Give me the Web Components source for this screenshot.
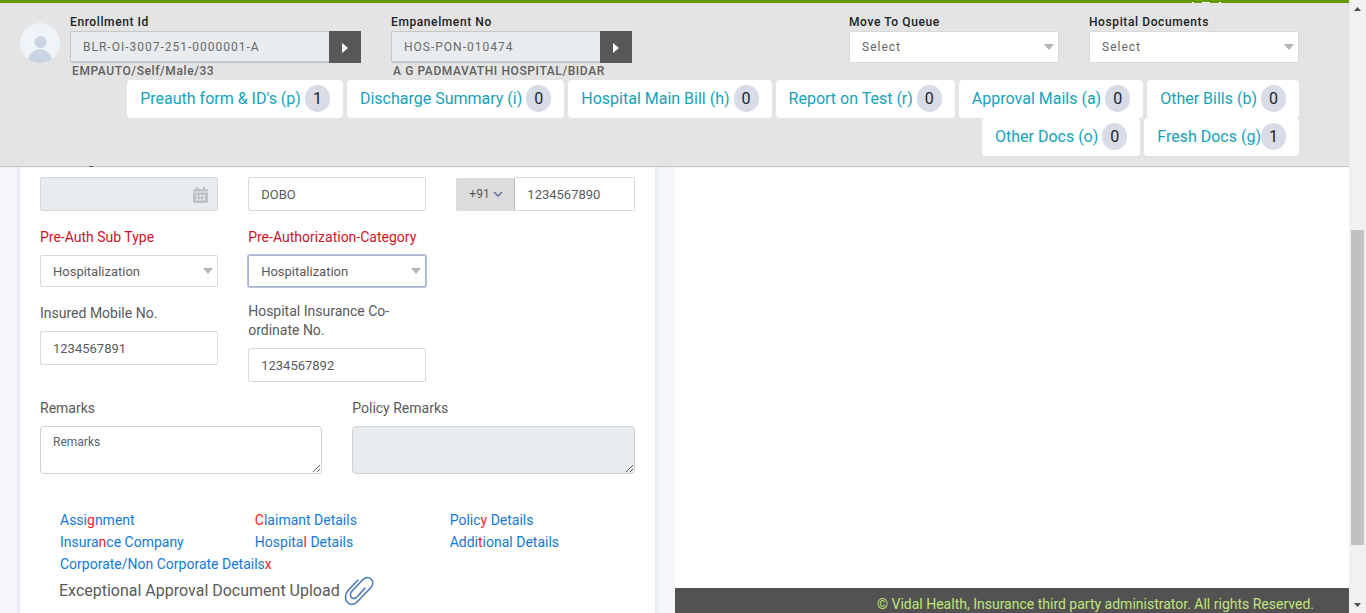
<!DOCTYPE html>
<html lang="en">
<head>
<meta charset="utf-8">
<meta name="viewport" content="width=device-width, initial-scale=1">
<title>Pre-Authorization</title>
<style>
  html, body { margin: 0; height: 100%; }
  body { font-family: Roboto, "Liberation Sans", sans-serif; font-size: 14px; color: #5a5a5a; background: #f4f6fb; overflow: hidden; }
</style>
</head>
<body>
<preauth-app></preauth-app>

<script>
const define = (name, html, setup) => {
  const template = document.createElement('template');
  template.innerHTML = html;
  customElements.define(name, class extends HTMLElement {
    constructor() {
      super();
      this.attachShadow({ mode: 'open' }).append(template.content.cloneNode(true));
    }
    connectedCallback() {
      if (setup && !this.ready) { this.ready = true; setup(this, this.shadowRoot); }
    }
  });
};

const fieldCss = `
  *, *::before, *::after { box-sizing: border-box; }
  :host { display: block; min-width: 0; }
  label { display: flex; align-items: flex-end; min-height: 21px; line-height: 19px; margin-bottom: 8px; color: #5a5a5a; }
  :host([required]) label { color: #d0142c; }
  input, select, textarea { display: block; width: 100%; height: 34px; margin: 0; padding: 0 12px; border: 1px solid #d9d9d9; border-radius: 2px; background: #fff; color: #5a5a5a; font: inherit; font-size: 13px; letter-spacing: inherit; outline: 0; }
  :host([compact]) label { min-height: 18px; line-height: 18px; margin: 0; font-size: 12px; font-weight: 500; letter-spacing: 0.05em; color: #212121; }
  :host([compact]) select { height: 32px; font-size: 12px; color: #646464; }
`;

/* Text box */
define('text-field', `
  <style>${fieldCss}
    .box { position: relative; }
    input:disabled { background: #e8ecef; color: #5a5a5a; }
    :host([nolabel]) label { display: none; }
    ::slotted(svg) { position: absolute; right: 10px; top: 10px; }
  </style>
  <label for="c"></label>
  <div class="box"><input id="c" type="text"><slot></slot></div>`,
  (host, root) => {
    const input = root.querySelector('input');
    root.querySelector('label').textContent = host.getAttribute('label');
    if (host.hasAttribute('nolabel')) input.setAttribute('aria-label', host.getAttribute('label'));
    input.value = host.getAttribute('value') || '';
    input.disabled = host.hasAttribute('disabled');
  });

/* Drop-down */
define('select-field', `
  <style>${fieldCss}
    .box { position: relative; }
    select { appearance: none; height: 32px; }
    .box::after { content: ""; position: absolute; right: 5px; top: 13px; border: 5px solid transparent; border-top: 6px solid #b5b5b5; border-bottom: 0; pointer-events: none; }
    :host([active]) select { border-color: #a9b5cd; box-shadow: 0 0 0 1px #bac4d8; }
  </style>
  <label for="c"></label>
  <div class="box"><select id="c"><option></option></select></div>`,
  (host, root) => {
    root.querySelector('label').textContent = host.getAttribute('label');
    root.querySelector('option').textContent = host.getAttribute('value');
  });

/* Multi-line box */
define('area-field', `
  <style>${fieldCss}
    textarea { height: 48px; padding: 7px 12px; border-color: #d2d2d2; border-radius: 4px; font-size: 12px; line-height: 16px; }
    textarea::placeholder { color: #5a5f66; opacity: 1; }
    textarea:disabled { background: #e8ecef; }
  </style>
  <label for="c"></label>
  <textarea id="c"></textarea>`,
  (host, root) => {
    const area = root.querySelector('textarea');
    root.querySelector('label').textContent = host.getAttribute('label');
    area.placeholder = host.getAttribute('placeholder') || '';
    area.disabled = host.hasAttribute('disabled');
  });

/* Country code + phone number */
define('phone-field', `
  <style>${fieldCss}
    :host { display: flex; }
    .code { position: relative; flex: none; width: 59px; padding-top: 1px; }
    .code select { appearance: none; height: 33px; border: 0; border-right: 1px solid #bdbdbd; border-radius: 2px 0 0 2px; background: #dcdcdc; font-size: 12px; padding: 0 0 2px 13px; }
    .code svg { position: absolute; right: 12px; top: 14px; pointer-events: none; }
    input { border-left: 0; border-radius: 0 2px 2px 0; }
  </style>
  <div class="code">
    <select aria-label="Country code"><option>+91</option></select>
    <svg width="10" height="7" viewBox="0 0 10 7" fill="none" stroke="#5b6c92" stroke-width="1.4"><path d="M1 1l4 4 4-4"/></svg>
  </div>
  <input type="tel" aria-label="Phone number" value="1234567890">`);

/* Read-only identifier with an open button and a caption */
define('id-field', `
  <style>
    *, *::before { box-sizing: border-box; }
    :host { display: block; font-size: 12px; letter-spacing: 0.05em; }
    label { display: block; line-height: 18px; font-weight: 500; color: #212121; }
    .row { display: flex; height: 32px; }
    input { flex: 1; min-width: 0; padding: 0 12px; border: 1px solid #c4c6c8; border-right: 0; border-bottom-width: 2px; border-radius: 2px 0 0 2px; background: #e8ecef; color: #6a6a6a; font: inherit; letter-spacing: 1px; }
    button { display: flex; align-items: center; justify-content: center; width: 32px; padding: 2px 0 0; border: 0; background: #585858; }
    .note { line-height: 16px; padding-left: 2px; font-weight: 500; color: #5f5f5f; white-space: nowrap; }
  </style>
  <label for="c"></label>
  <div class="row">
    <input id="c" type="text" readonly>
    <button type="button" aria-label="Open"><svg width="6" height="10" viewBox="0 0 6 10"><path d="M0 0l6 5-6 5z" fill="#fff"/></svg></button>
  </div>
  <div class="note"><slot></slot></div>`,
  (host, root) => {
    root.querySelector('label').textContent = host.getAttribute('label');
    root.querySelector('input').value = host.getAttribute('value');
  });

/* Document chip with its count */
define('doc-chip', `
  <style>
    :host { display: block; }
    a { display: flex; align-items: center; height: 38px; box-sizing: border-box; padding: 0 13px 1px; border-radius: 4px; background: #fff; color: #17a2b8; font-size: 16px; text-decoration: none; white-space: nowrap; gap: 4px; }
    :host([tight]) a { gap: 0; }
    .n { width: 25px; line-height: 27px; border-radius: 13px; background: #d8dce6; color: #212529; text-align: center; }
  </style>
  <a href="#"><span><slot></slot></span><span class="n"></span></a>`,
  (host, root) => { root.querySelector('.n').textContent = host.getAttribute('count'); });

define('page-header', `
  <style>
    :host { display: block; position: relative; z-index: 1; flex: none; box-sizing: border-box; padding: 10px 50px 10px 20px; border-top: 3px solid #669a04; background: #e4e4e4; box-shadow: 0 1px 1px #c8c8c8; }
    .fields { display: flex; align-items: flex-start; height: 67px; }
    .avatar { flex: none; margin: 10px 10px 0 0; }
    .enrol { width: 291px; margin-right: 30px; }
    .panel { width: 241px; }
    .picks { display: flex; gap: 30px; margin-left: auto; letter-spacing: 1px; }
    .picks select-field { width: 210px; }
    nav { display: flex; flex-wrap: wrap; justify-content: flex-end; column-gap: 4px; }
    .peek { position: absolute; top: -1px; right: 127px; }
    .tail { position: absolute; left: 89px; bottom: -1px; width: 4px; height: 1px; background: #555; }
  </style>
  <svg class="peek" width="30" height="1" aria-hidden="true"><path d="M0 0h2v1H0zM10 0h8v1h-8zM27 0h2v1h-2z" fill="#fff"/></svg>
  <div class="fields">
    <svg class="avatar" width="40" height="40" viewBox="0 0 40 40"><defs><clipPath id="k"><circle cx="20" cy="20" r="20"/></clipPath></defs><g clip-path="url(#k)"><rect width="40" height="40" fill="#eff4f8"/><circle cx="20.500" cy="19" r="6" fill="#cbd5e2"/><ellipse cx="20" cy="39" rx="12" ry="13" fill="#cbd5e2"/></g></svg>
    <id-field class="enrol" label="Enrollment Id" value="BLR-OI-3007-251-0000001-A">EMPAUTO/Self/Male/33</id-field>
    <id-field class="panel" label="Empanelment No" value="HOS-PON-010474">A G PADMAVATHI HOSPITAL/BIDAR</id-field>
    <div class="picks">
      <select-field compact label="Move To Queue" value="Select"></select-field>
      <select-field compact label="Hospital Documents" value="Select"></select-field>
    </div>
  </div>
  <nav>
    <doc-chip count="1">Preauth form &amp; ID's (p)</doc-chip>
    <doc-chip count="0">Discharge Summary (i)</doc-chip>
    <doc-chip count="0">Hospital Main Bill (h)</doc-chip>
    <doc-chip count="0">Report on Test (r)</doc-chip>
    <doc-chip count="0">Approval Mails (a)</doc-chip>
    <doc-chip count="0">Other Bills (b)</doc-chip>
    <doc-chip count="0">Other Docs (o)</doc-chip>
    <doc-chip tight count="1">Fresh Docs (g)</doc-chip>
  </nav>
  <span class="tail"></span>`);

define('preauth-form', `
  <style>
    :host { display: block; box-sizing: border-box; padding: 11px 20px 0; background: #fff; box-shadow: 0 0 6px #d5d8e2; }
    .grid { display: grid; grid-template-columns: repeat(3, 1fr); gap: 15px 30px; }
    .two { display: grid; grid-template-columns: 1fr 1fr; gap: 30px; margin-top: 15px; }
    .links { display: grid; grid-template-columns: repeat(3, minmax(0, 1fr)); margin: 35px -10px 0 20px; line-height: 22px; }
    .links a { color: #1479d2; text-decoration: none; white-space: nowrap; }
    em { font-style: normal; color: #f22; }
    .upload { display: flex; align-items: center; gap: 4px; margin: 1px 0 0 19px; padding-bottom: 20px; font-size: 16px; line-height: 30px; }
    .upload a { display: flex; }
  </style>
  <div class="grid">
    <text-field nolabel disabled label="Date">
      <svg width="15" height="16" viewBox="0 0 15 16"><path fill="#bfc2c4" d="M3 0h2v2h5V0h2v2h1.500a1.500 1.500 0 0 1 1.500 1.500V4.500H0V3.500A1.500 1.500 0 0 1 1.500 2H3zM0 5.500h15v9a1.500 1.500 0 0 1-1.500 1.500h-12A1.500 1.500 0 0 1 0 14.500z"/><path fill="#e8ecef" d="M3 8h2v2H3zM6.500 8h2v2h-2zM10 8h2v2h-2zM3 11.500h2v2H3zM6.500 11.500h2v2h-2zM10 11.500h2v2h-2z"/></svg>
    </text-field>
    <text-field nolabel label="Doctor" value="DOBO"></text-field>
    <phone-field></phone-field>
    <select-field required label="Pre-Auth Sub Type" value="Hospitalization"></select-field>
    <select-field required active label="Pre-Authorization-Category" value="Hospitalization"></select-field>
    <span></span>
    <text-field label="Insured Mobile No." value="1234567891"></text-field>
    <text-field label="Hospital Insurance Co-ordinate No." value="1234567892"></text-field>
  </div>
  <div class="two">
    <area-field label="Remarks" placeholder="Remarks"></area-field>
    <area-field label="Policy Remarks" disabled></area-field>
  </div>
  <div class="links">
    <a href="#">Assi<em>g</em>nment</a><a href="#"><em>C</em>laimant Details</a><a href="#">Polic<em>y</em> Details</a>
    <a href="#">Insura<em>n</em>ce Company</a><a href="#">Hospita<em>l</em> Details</a><a href="#">Addi<em>t</em>ional Details</a>
    <a href="#">Corporate/Non Corporate Details<em>x</em></a>
  </div>
  <div class="upload"><span>Exceptional Approval Document Upload</span>
    <a href="#" aria-label="Attach"><svg width="30" height="30" viewBox="0 0 30 30" fill="none" stroke="#4a7ab8" stroke-width="1.600" stroke-linecap="round" stroke-linejoin="round"><path d="M14 4L4 14.500C1 18 .5 23.500 3.500 26.500S11 28.500 14 25L27 11.500c2.500-3 2-6.500 0-8.500s-5.500-2-8 .5L8 15c-2 2-2 5-.5 6.500s4 1 6-1L21 12"/></svg></a>
  </div>`);

define('page-footer', `
  <style>
    :host { display: block; box-sizing: border-box; height: 25px; padding: 7px 35px 0 0; background: #525252; color: #c0e57b; text-align: right; line-height: 19px; white-space: nowrap; }
  </style>
  <slot></slot>`);

define('page-scrollbar', `
  <style>
    :host { display: flex; flex-direction: column; align-items: center; flex: none; width: 17px; background: #f1f1f1; }
    button { display: flex; align-items: center; justify-content: center; width: 17px; height: 17px; padding: 0; border: 0; background: none; }
    .track { flex: 1; display: grid; grid-template-rows: 213fr 315fr 51fr; width: 13px; }
    .thumb { grid-row: 2; background: #c1c1c1; }
  </style>
  <button type="button" aria-label="Scroll up"><svg width="7" height="4" viewBox="0 0 7 4"><path d="M0 4l3.500-4L7 4z" fill="#505050"/></svg></button>
  <div class="track"><div class="thumb"></div></div>
  <button type="button" aria-label="Scroll down"><svg width="7" height="4" viewBox="0 0 7 4"><path d="M0 0l3.500 4L7 0z" fill="#505050"/></svg></button>`);

define('preauth-app', `
  <style>
    :host { display: flex; height: 100vh; overflow: hidden; }
    .page { flex: 1; min-width: 0; display: flex; flex-direction: column; }
    main { flex: 1; min-height: 0; display: grid; grid-template-columns: 1fr 1fr; grid-template-rows: minmax(0, 1fr); overflow: hidden; }
    .left { min-width: 0; padding: 0 20px; }
    .right { min-width: 0; display: flex; flex-direction: column; justify-content: flex-end; background: #fff; }
  </style>
  <div class="page">
    <page-header></page-header>
    <main>
      <div class="left"><preauth-form></preauth-form></div>
      <div class="right"><page-footer>© Vidal Health, Insurance third party administrator. All rights Reserved.</page-footer></div>
    </main>
  </div>
  <page-scrollbar></page-scrollbar>`);
</script>
</body>
</html>
